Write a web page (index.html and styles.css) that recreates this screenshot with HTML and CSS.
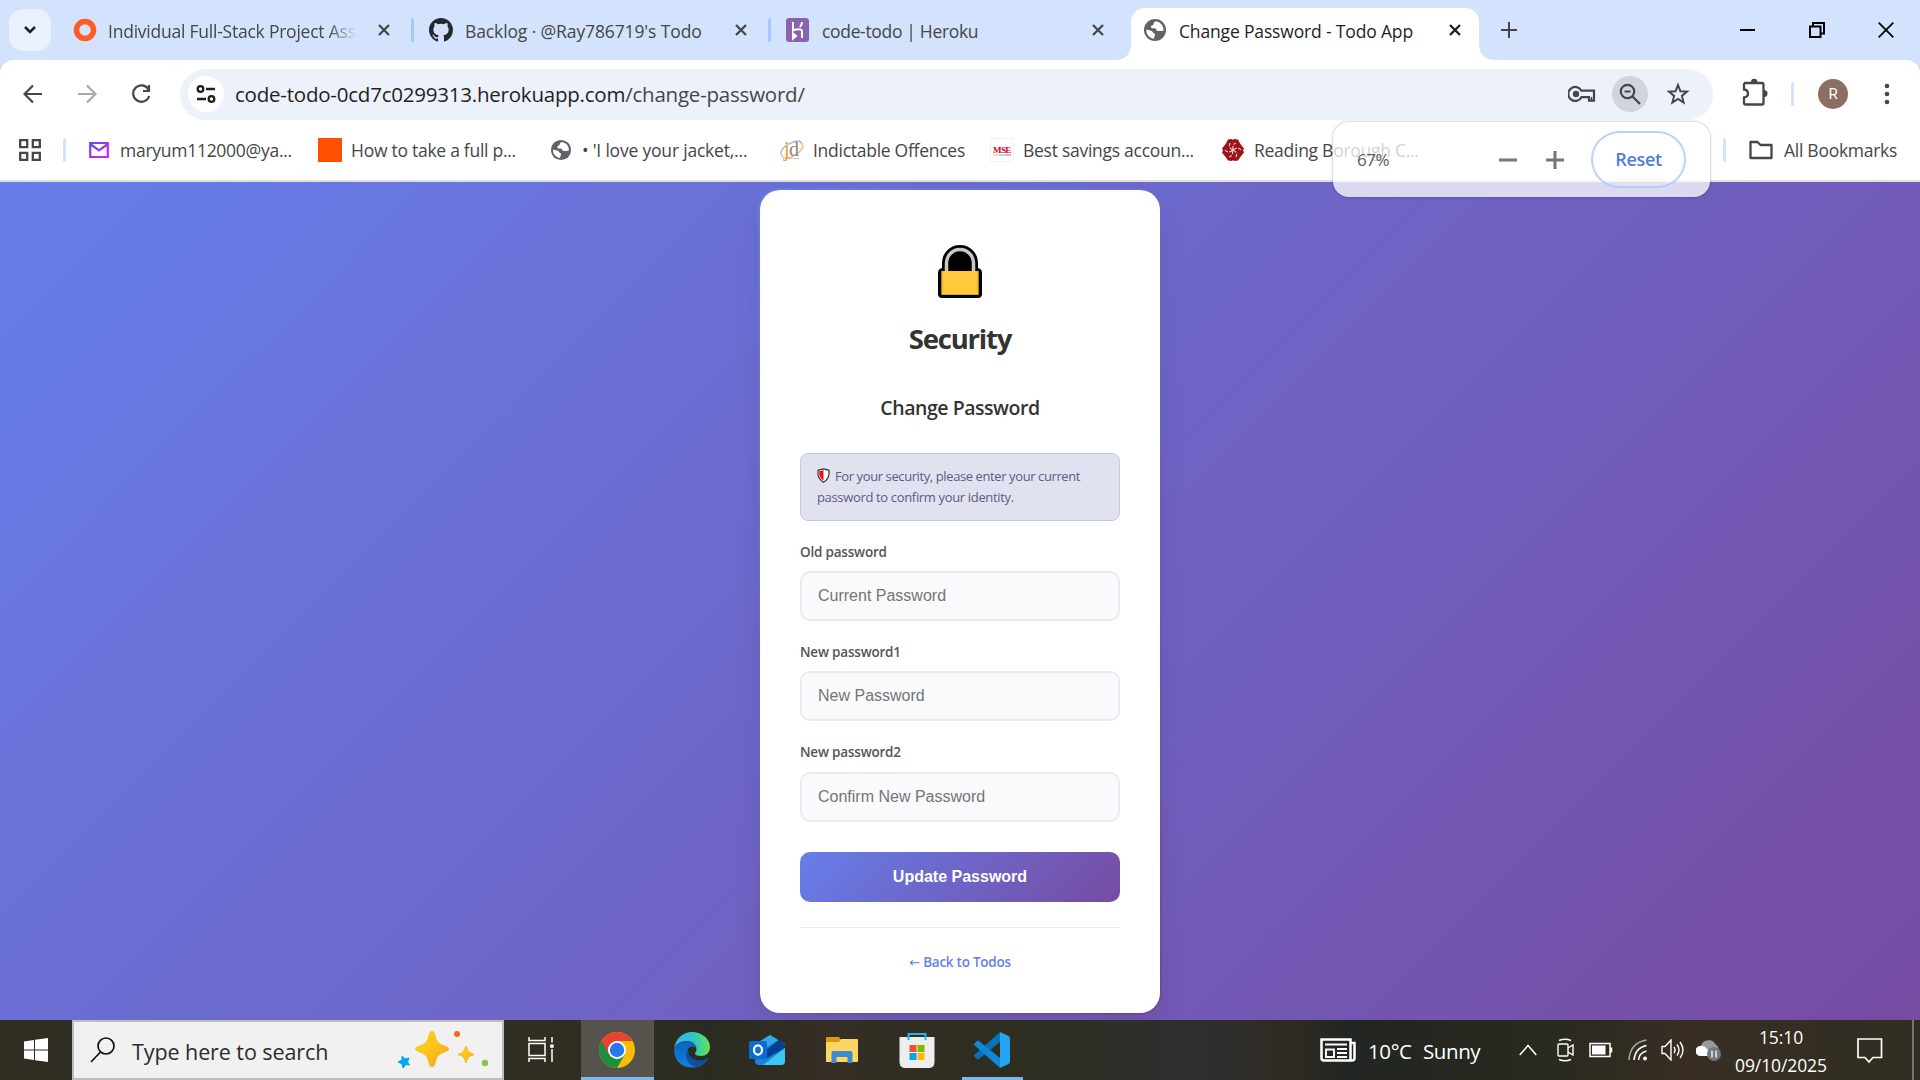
FILE: index.html
```html
<!DOCTYPE html>
<html lang="en">
<head>
<meta charset="utf-8">
<title>Change Password - Todo App</title>
<link rel="stylesheet" href="styles.css">
</head>
<body>
<svg class="defs" width="0" height="0">
  <symbol id="x" viewBox="0 0 14 14"><path d="M2 2l10 10M12 2L2 12" fill="none" stroke="currentColor" stroke-width="2.3"/></symbol>
  <symbol id="globe" viewBox="0 0 24 24"><circle cx="12" cy="12" r="11" fill="#5f6368"/><path d="M13 3.2c-3.500 1.300-1.500 3.300-3.500 4-1.800.6-2 1.800-.8 2.800 1 .8 2.800-.2 4 .8 1.400 1 .3 2.200 2.300 2.200 2 .1 4.500.2 5.700-.4A9 9 0 0 0 13 3.200M3.200 11.500c2.500 1 6 .8 6.500 2.500.4 1.600 2.600 1 2.300 3-.2 1.500-1 2.300-1 3.800A9 9 0 0 1 3.200 11.500" fill="#fff"/></symbol>
</svg>
<header class="tabs">
  <div class="search-tabs"><svg width="16" height="12" viewBox="0 0 16 12"><path d="M3 3l5 5 5-5" fill="none" stroke="#1f1f1f" stroke-width="2.500"/></svg></div>
  <div class="tab t1"><svg width="24" height="24"><circle cx="12" cy="12" r="8.500" fill="none" stroke="#ff5b26" stroke-width="5.500"/></svg><span class="title fade"><b class="s1">Individual Full-Stack Project Ass</b></span><svg class="close"><use href="#x"/></svg></div>
  <i class="sep"></i>
  <div class="tab t2"><svg width="24" height="24" viewBox="0 0 16 16"><path fill="#24292f" d="M8 0C3.580 0 0 3.580 0 8c0 3.540 2.290 6.530 5.470 7.590.4.070.55-.17.55-.38 0-.19-.01-.82-.01-1.490-2.010.37-2.530-.49-2.690-.94-.09-.23-.48-.94-.82-1.130-.28-.15-.68-.52-.01-.53.63-.01 1.080.58 1.230.82.72 1.210 1.870.87 2.330.66.07-.52.28-.87.51-1.070-1.780-.2-3.640-.89-3.640-3.950 0-.87.31-1.590.82-2.150-.08-.2-.36-1.020.08-2.120 0 0 .67-.21 2.200.82a7.600 7.600 0 0 1 4 0c1.530-1.040 2.200-.82 2.200-.82.44 1.100.16 1.920.08 2.120.51.56.82 1.270.82 2.150 0 3.070-1.870 3.750-3.650 3.950.29.25.54.73.54 1.480 0 1.070-.01 1.930-.01 2.200 0 .21.15.46.55.38A8 8 0 0 0 16 8c0-4.420-3.580-8-8-8"/></svg><span class="title"><b class="s2">Backlog · @Ray786719's Todo</b></span><svg class="close"><use href="#x"/></svg></div>
  <i class="sep"></i>
  <div class="tab t3"><svg width="24" height="24"><rect width="23" height="24" rx="3" fill="#8a63ad"/><path d="M7 4v8.500c3-1.500 9-2.500 9 1V20M7 15.500v5l3-2.500zM16 4c0 2-.8 3.500-2 5" fill="none" stroke="#fff" stroke-width="2"/></svg><span class="title"><b class="s3">code-todo | Heroku</b></span><svg class="close"><use href="#x"/></svg></div>
  <div class="tab active"><svg width="24" height="24"><use href="#globe"/></svg><span class="title"><b class="s4">Change Password - Todo App</b></span><svg class="close"><use href="#x"/></svg></div>
  <svg class="newtab" width="18" height="18"><path d="M9 1v16M1 9h16" stroke="#444746" stroke-width="2"/></svg>
  <div class="winbtns">
    <svg width="16" height="16"><path d="M0 8h15" stroke="#000" stroke-width="2"/></svg>
    <svg width="16" height="16"><path d="M1 4.500h10.500V15H1zM4 4V1h11v10.500h-3" fill="none" stroke="#000" stroke-width="2"/></svg>
    <svg width="16" height="16"><path d="M.7.7l14.600 14.600M15.300.7L.7 15.300" stroke="#000" stroke-width="1.800"/></svg>
  </div>
</header>
<div class="toolbar">
  <svg class="nav" width="20" height="20"><path d="M19 10H2M10 1.500L1.500 10l8.500 8.500" fill="none" stroke="#444746" stroke-width="2.200"/></svg>
  <svg class="nav" width="20" height="20"><path d="M1 10h17M10 1.500l8.500 8.500-8.500 8.500" fill="none" stroke="#a8a9a9" stroke-width="2.200"/></svg>
  <svg class="nav" width="20" height="20"><path d="M17.500 5.500A8.200 8.200 0 1 0 18.200 12M18 1v6h-6" fill="none" stroke="#444746" stroke-width="2.200"/></svg>
  <div class="omnibox">
    <span class="site"><svg width="20" height="20"><g fill="none" stroke="#1f1f1f" stroke-width="2.300"><circle cx="4.500" cy="5" r="2.800"/><circle cx="15.500" cy="15" r="2.800"/><path d="M10 5h9M1 15h9"/></g></svg></span>
    <span class="url">code-todo-0cd7c0299313.herokuapp.com<em>/change-password/</em></span>
    <svg width="28" height="20" viewBox="0 0 28 20"><g fill="none" stroke="#444746" stroke-width="2.200"><path d="M13.500 6.700A7 7 0 1 0 13.500 13.200H18v0h3v3.500h5V6.700z"/><path d="M23.500 13v3.500" stroke-width="1.500"/></g><circle cx="8" cy="10" r="3.200" fill="#444746"/></svg>
    <span class="zoomicon"><svg width="22" height="22"><g fill="none" stroke="#444746" stroke-width="2.200"><circle cx="8.500" cy="8.500" r="6.700"/><path d="M13.300 13.300l7.700 7.700M5.500 8.500h6"/></g></svg></span>
    <svg width="24" height="24" viewBox="0 0 24 24"><path d="M12 3l2.400 6.200 6.600.4-5.100 4.300 1.700 6.600L12 16.900l-5.600 3.600 1.700-6.600L3 9.600l6.600-.4z" fill="none" stroke="#444746" stroke-width="2"/></svg>
  </div>
  <svg class="puzzle" width="26" height="30" viewBox="0 0 26 30"><path d="M2 6h18q1.500 0 1.500 1.500V26q0 1.500-1.500 1.500H3.500Q2 27.500 2 26v-5.500q4-.5 4-4t-4-4V6" fill="none" stroke="#444746" stroke-width="2.300"/><path d="M9 5a3.200 3.200 0 0 1 6.400 0zM22 13a3.400 3.400 0 0 1 0 7z" fill="#444746"/></svg>
  <i class="sep bar"></i>
  <span class="avatar">R</span>
  <svg class="dots" width="6" height="24"><g fill="#444746"><circle cx="3" cy="4" r="2.300"/><circle cx="3" cy="12" r="2.300"/><circle cx="3" cy="20" r="2.300"/></g></svg>
</div>
<nav class="bookmarks">
  <svg class="apps" width="22" height="22"><path d="M1.200 1.200h7v7h-7zM13.800 1.200h7v7h-7zM1.200 13.800h7v7h-7zM13.800 13.800h7v7h-7z" fill="none" stroke="#444746" stroke-width="2.300"/></svg>
  <i class="sep bar"></i>
  <a class="bm b1"><svg width="20" height="20"><defs><linearGradient id="m" x2="1" y2="1"><stop stop-color="#5b4df5"/><stop offset="1" stop-color="#e51bf0"/></linearGradient></defs><path d="M1.200 3h17.600v14H1.200zM1.200 4l8.800 6.500L18.800 4" fill="none" stroke="url(#m)" stroke-width="2.200"/></svg><b>maryum112000@ya...</b></a>
  <a class="bm b2"><svg width="24" height="24"><path d="M0 0h24v24H0z" fill="#ff4f00"/></svg><b>How to take a full p...</b></a>
  <a class="bm b3"><svg width="22" height="22"><use href="#globe"/></svg><b>• 'I love your jacket,...</b></a>
  <a class="bm b4"><svg width="24" height="24"><g fill="none" stroke-width="1.300"><path d="M2 18Q-2 12 9 6T22 6" stroke="#b5b5b5"/><path d="M22 6q3 5-7 11T2 18" stroke="#f4b26a"/></g><text x="4" y="18" class="j">j</text><text x="9" y="18" class="j d">d</text><path d="M9 20.500h10" stroke="#c8c8c8"/></svg><b>Indictable Offences</b></a>
  <a class="bm b5"><svg width="24" height="24"><rect x=".5" y=".5" width="23" height="23" rx="2" fill="#fff" stroke="#f1f1f1"/><text x="3" y="15" class="mse" textLength="18">MSE</text><path d="M3 17h6" stroke="#f4c84b"/><path d="M9 17h6" stroke="#45c5d6"/><path d="M15 17h6" stroke="#e64fa0"/></svg><b>Best savings accoun...</b></a>
  <a class="bm b6"><svg width="24" height="24"><path d="M7 1.500L11 1l1 1 1-1 4 .5 2 4 4 5-1 2 1 2-4 5-2 3-4 .5-1-1-1 1-4-.5-2-3-4-5 1-2-1-2 4-5z" fill="#9c1218"/><g fill="none" stroke="#f3caca" stroke-width="1.200" stroke-dasharray="4 1.500"><path d="M12 12q-1-6 3-7M12 12q5-4 8 0M12 12q5 2 3 7M12 12q0 6-4 7M12 12q-5 4-8 0M12 12q-5-2-3-7"/></g></svg><b>Reading Borough C...</b></a>
  <span class="allbm"><i class="sep bar"></i><svg width="24" height="20"><path d="M1.500 2h7l3 3h11v13h-21z" fill="none" stroke="#444746" stroke-width="2.300" stroke-linejoin="round"/></svg><b>All Bookmarks</b></span>
</nav>
<aside class="zoombox"><span class="pct">67%</span><svg class="zm" width="18" height="18"><path d="M0 9h18" stroke="#767676" stroke-width="3"/></svg><svg class="zp" width="18" height="18"><path d="M0 9h18M9 0v18" stroke="#767676" stroke-width="3"/></svg><button class="reset">Reset</button></aside>
<main class="page">
  <section class="card">
    <svg class="lock" width="44" height="54" viewBox="0 0 44 54"><path d="M4 24V19a18 18 0 0 1 36 0v5q4 1 4 5v21q0 4-4 4H4q-4 0-4-4V29q0-4 4-5" fill="#000"/><path d="M8.500 28V19a13.500 13.500 0 0 1 27 0v9" fill="none" stroke="#c8c8c8" stroke-width="3.500"/><path d="M3.500 27h37v24h-37z" fill="#ffc83d"/><path d="M4 27v23.500h36V27" fill="none" stroke="#dca020"/></svg>
    <h1>Security</h1>
    <h2>Change Password</h2>
    <div class="note"><svg width="13" height="15" viewBox="0 0 13 15"><path d="M6.500.8l5.500 1.500v4q-.5 5-5.500 8-5-3-5.500-8v-4z" fill="#fff" stroke="#333" stroke-width="1.200"/><path d="M6.500 2.300v10.300Q2.700 10 2.300 6.300v-3z" fill="#e81224"/></svg><b class="n1">For your security, please enter your current</b><br><b class="n2">password to confirm your identity.</b></div>
    <label>Old password</label><input placeholder="Current Password">
    <label>New password1</label><input placeholder="New Password">
    <label>New password2</label><input class="last" placeholder="Confirm New Password">
    <button class="update">Update Password</button>
    <footer><a><span class="arrow">←</span> Back to Todos</a></footer>
  </section>
</main>
<div class="taskbar">
  <div class="start"><svg width="24" height="24"><path d="M0 3.400L10 2v9.500H0zM11 1.800L24 0v11.500H11zM0 12.500h10V22L0 20.600zM11 12.500h13V24l-13-1.800z" fill="#fff"/></svg></div>
  <div class="search">
    <svg width="26" height="26"><circle cx="16" cy="9" r="8" fill="none" stroke="#111" stroke-width="1.700"/><path d="M10.500 15L1 25" stroke="#111" stroke-width="1.700"/></svg>
    <b>Type here to search</b>
    <svg class="spark" width="96" height="42" viewBox="0 0 96 42"><defs><linearGradient id="g" x2="1" y2="1"><stop stop-color="#ffd21f"/><stop offset=".5" stop-color="#fcc419"/><stop offset="1" stop-color="#f39a2b"/></linearGradient></defs><path d="M35 2q3 0 4 6 1 6 7 8 6 2 6 4t-6 4q-6 2-7 8-1 6-4 6t-4-6q-1-6-7-8-6-2-6-4t6-4q6-2 7-8 1-6 4-6" fill="url(#g)"/><path d="M69 17q2 5 2.500 5.500T77 25.500q-5 2-5.500 2.500T69 34q-2-5-2.500-6T61 25.500q5-2 5.500-3T69 17" fill="url(#g)" stroke="#fbb928"/><path d="M5 27l3 3 4-1-1.500 4 2 3-3.500-.5L6 39l-1-4-4-2 4-2z" fill="#00a8f0" stroke="#00a8f0" stroke-linejoin="round"/><circle cx="60" cy="5" r="3" fill="#f26522"/><circle cx="88" cy="34" r="3.200" fill="#8cc63f"/></svg>
  </div>
  <div class="task view"><svg width="26" height="26"><path d="M1 0v3.500h16V0M1 25v-3.500h16V25M1 6.500h16v12H1zM24 0v5.500M24 12v13" fill="none" stroke="#fff" stroke-width="1.500"/><path d="M22.200 7.500h3.500v3.300h-3.500z" fill="#fff"/></svg></div>
  <div class="task on"><svg width="36" height="36" viewBox="0 0 36 36"><circle cx="18" cy="18" r="18" fill="#fbbc05"/><path d="M2.400 9A18 18 0 0 0 18 36l7.800-13.500L18 18z" fill="#1e8e3e"/><path d="M18 9h15.600A18 18 0 0 0 2.400 9l7.800 13.500z" fill="#e94235"/><circle cx="18" cy="18" r="9" fill="#fff"/><circle cx="18" cy="18" r="7.200" fill="#2878eb"/></svg></div>
  <div class="task"><svg width="36" height="36" viewBox="0 0 36 36"><defs><linearGradient id="e1"><stop stop-color="#35b8ee"/><stop offset=".55" stop-color="#2fc4c7"/><stop offset="1" stop-color="#67e34c"/></linearGradient><linearGradient id="e2" x2="0" y2="1"><stop stop-color="#0d62b7"/><stop offset="1" stop-color="#0e83dd"/></linearGradient></defs><path d="M0 17C1 7 9 0 18 0c10 0 18 7 18 15 0 6-4 9-9 9-4 0-6-1-6-2.500 0-1 1.500-2 1.500-4.500 0-4-4-8-9.500-8C7 9 1 12 0 17" fill="url(#e1)"/><path d="M0 18C1 12 7 9 13 9c5 0 9 3 9.500 7.500C20 13 13 14 13 21c0 8 6 13 13 13-12 5-26-2-26-16" fill="url(#e2)"/><path d="M14 17c-5 8 1 18 10 18 5-1 9-6 10-8 0-1-1-1-2 0-10 4-18-1-18-10" fill="#0f4f9e"/></svg></div>
  <div class="task"><svg width="36" height="32" viewBox="0 0 36 32"><path d="M6 10L21 1l15 9v17q0 4-4 4H10q-4 0-4-4z" fill="#1684d8"/><path d="M21 1l8 5-14 9-5-7z" fill="#32a8ea"/><path d="M30 6l6 5v3L18 24v-9z" fill="#063f91"/><path d="M36 14v13q0 4-4 4H14z" fill="#39c7f5"/><rect y="7" width="18" height="18" rx="1.500" fill="#0b6dcf"/><ellipse cx="9" cy="16" rx="4" ry="4.700" fill="none" stroke="#fff" stroke-width="2.200"/></svg></div>
  <div class="task"><svg width="32" height="26"><path d="M0 1q0-1 1-1h12l2 3v5H0z" fill="#d99a0b"/><path d="M0 5h13l2-3h16q1 0 1 1v21q0 1-1 1H0z" fill="#ffd561"/><path d="M5.500 26V16q0-2 2-2h17q2 0 2 2v10h-5v-6h-11v6z" fill="#398bd4"/></svg></div>
  <div class="task"><svg width="36" height="36"><path d="M.5 5h35v25q0 6-6 6h-23q-6 0-6-6z" fill="#ededed"/><path d="M9.500 8V2h17v6" fill="none" stroke="#29b1ea" stroke-width="2"/><path d="M10.500 13h7v7h-7z" fill="#f25022"/><path d="M18.500 13h7v7h-7z" fill="#7fba00"/><path d="M10.500 21h7v7h-7z" fill="#00a4ef"/><path d="M18.500 21h7v7h-7z" fill="#ffb900"/></svg></div>
  <div class="task run"><svg width="36" height="36" viewBox="0 0 36 36"><path d="M26 0v10L5 27q-1 .8-2 0l-2.500-2.300q-1-1 0-2z" fill="#0871b8"/><path d="M26 36V26L5 9q-1-.8-2 0L.5 11.300q-1 1 0 2z" fill="#0d88d4"/><path d="M26 0l8.500 4q1.500.8 1.500 2.500v23q0 1.700-1.500 2.500L26 36z" fill="#25a4f1"/></svg></div>
  <div class="tray">
    <div class="weather"><svg width="36" height="24" viewBox="0 0 36 24"><path d="M1.500 1.500h29v21H4q-2.500 0-2.500-2.500zM30.500 5h4v15q0 2.500-2.500 2.500h-3" fill="none" stroke="#fff" stroke-width="2.500"/><path d="M5 6.500h22M17 11h10M17 15h10M17 19h10" stroke="#fff" stroke-width="1.900"/><path d="M6 11.500h8v7.500H6z" fill="none" stroke="#fff" stroke-width="1.900"/></svg><b class="deg">10°C</b><b class="sun">Sunny</b></div>
    <svg class="caret" width="18" height="12"><path d="M.7 11L9 1.500l8.300 9.500" fill="none" stroke="#fff" stroke-width="1.500"/></svg>
    <svg class="meet" width="18" height="24"><g fill="none" stroke="#fff" stroke-width="1.400"><rect x="1" y="6" width="10" height="12" rx="1"/><path d="M11 10l5-3v10l-5-3M2 2.500Q8 0 14 2.500M2 21.500q6 2.500 12 0"/></g></svg>
    <svg class="battery" width="24" height="16"><path d="M1 1.500h20v13H1zM22.500 5.500v5" fill="none" stroke="#fff" stroke-width="1.500"/><path d="M3 3.500h13.500v9H3z" fill="#fff"/></svg>
    <svg class="wifi" width="20" height="22"><path d="M1 21Q2 4 18.500 1" fill="none" stroke="#aaa" stroke-width="1.500"/><path d="M6 21Q7 9 18.500 6.500M10.500 21Q11 14 18.500 12" fill="none" stroke="#fff" stroke-width="1.500"/><circle cx="17" cy="19.500" r="2" fill="#fff"/></svg>
    <svg class="vol" width="24" height="22"><path d="M1 7.500h3L10 1v20l-6-6.500H1zM13 8q2 3 0 6M16 5.500q4 5.500 0 11M19 3q6 8 0 16" fill="none" stroke="#fff" stroke-width="1.400"/></svg>
    <svg class="cloud" width="26" height="24"><path d="M5 8a8 8 0 0 1 15-1q3 1 2 5L8 18z" fill="#999"/><path d="M5 18a5 5 0 0 1-1-10q4-1 7 3l8 7z" fill="#fff"/><circle cx="18" cy="16" r="7" fill="#73777b"/><path d="M16 12.500v7M20 12.500v7" stroke="#fff" stroke-width="1.300"/></svg>
    <div class="clock"><b class="time">15:10</b><b class="date">09/10/2025</b></div>
    <svg class="action" width="26" height="28"><path d="M1 1h23.500v18.500H16l-4 4.500-4-4.500H1z" fill="none" stroke="#fff" stroke-width="1.700"/></svg>
    <i class="peek"></i>
  </div>
</div>
</body>
</html>
```
FILE: styles.css
```css
* { box-sizing: border-box; }
body { margin: 0; width: 1920px; height: 1080px; overflow: hidden; display: flex; flex-direction: column; position: relative; font-family: "Open Sans", "Noto Sans", sans-serif; background: #fff; }
b { font-weight: 400; white-space: nowrap; }
svg, .sep { flex: none; }
.defs { position: absolute; }
.tabs { position: relative; z-index: 1; height: 60px; flex: none; background: #d3e3fd; display: flex; align-items: center; padding: 0 26px 0 9px; font-size: 17.5px; color: #444746; }
.search-tabs { width: 42px; height: 42px; border-radius: 14px; background: #e9f0fe; display: flex; align-items: center; justify-content: center; }
.tab { display: flex; align-items: center; height: 52px; padding-right: 20px; }
.tab .title { margin-left: 12px; flex: 1; overflow: hidden; display: flex; padding-top: 2px; }
.t1 { width: 360px; padding-left: 22px; }
.t1 .title { margin-left: 11px; }
.s1 { letter-spacing: -.23px; }
.t2 { width: 354px; padding-left: 15px; }
.s2 { letter-spacing: -.12px; }
.t3 { width: 360px; padding-left: 15px; padding-right: 26px; }
.s3 { letter-spacing: -.33px; }
.s4 { letter-spacing: -.16px; }
.fade { -webkit-mask-image: linear-gradient(90deg, #000 87%, transparent 99%); mask-image: linear-gradient(90deg, #000 87%, transparent 99%); max-width: 252px; margin-right: 17px; }
.sep { width: 3px; height: 24px; border-radius: 2px; background: #a8c7fa; }
.sep.bar { background: #d3e3fd; }
.close { width: 14px; height: 14px; }
.active { width: 348px; height: 52px; align-self: flex-end; background: #fff; border-radius: 14px 14px 0 0; padding: 0 17px 8px 12px; color: #1f1f1f; position: relative; }
.active::before, .active::after { content: ""; position: absolute; bottom: 0; width: 14px; height: 14px; }
.active::before { left: -14px; background: radial-gradient(circle at 0 0, transparent 13.500px, #fff 14px); }
.active::after { right: -14px; background: radial-gradient(circle at 100% 0, transparent 13.500px, #fff 14px); }
.newtab { margin-left: 21px; }
.winbtns { margin-left: auto; display: flex; gap: 53px; }
.toolbar { height: 65px; flex: none; display: flex; align-items: center; background: #fff; border-radius: 14px 14px 0 0; padding: 5px 30px 1px 23px; box-shadow: 0 -14px 0 0 #d3e3fd; }
.nav { margin-right: 34px; flex: none; }
.nav:nth-child(3) { margin-right: 29px; }
.omnibox { width: 1533px; flex: none; height: 51px; margin-top: 5px; border-radius: 26px; background: #ecf1fa; display: flex; align-items: center; padding: 0 23px 0 8px; }
.toolbar { padding-top: 3px; padding-bottom: 0; }
.omnibox { margin-top: 0; }
.site { width: 36px; height: 36px; border-radius: 50%; background: #fff; display: flex; align-items: center; justify-content: center; }
.url { margin-left: 11px; flex: 1; font-size: 20.5px; color: #1f1f1f; letter-spacing: -.22px; white-space: nowrap; }
.url em { font-style: normal; color: #444746; }
.zoomicon { width: 36px; height: 36px; border-radius: 50%; background: #d0d5dd; display: flex; align-items: center; justify-content: center; margin: 0 18px 0 16px; }
.puzzle { margin: 0 23px 4px 29px; }
.avatar { width: 30px; height: 30px; flex: none; border-radius: 50%; background: #8d6e63; color: #fff; font: 15px/30px Roboto, sans-serif; text-align: center; margin: 0 36px 0 24px; }
.bookmarks { height: 57px; flex: none; display: flex; align-items: center; padding: 0 21px 5px 19px; border-bottom: 2px solid #dedfe2; font-size: 17.5px; letter-spacing: -.27px; color: #444746; }
.apps { margin-right: 22px; }
.bm { display: flex; align-items: center; gap: 9px; }
.b1 { margin-left: 23px; width: 229px; gap: 11px; }
.b2 { width: 232px; }
.b3 { width: 230px; gap: 10px; letter-spacing: -.2px; }
.b4 { width: 210px; }
.b5 { width: 231px; }
.b6 { width: 220px; }
.allbm { margin-left: auto; display: flex; align-items: center; gap: 11px; width: 176px; }
.allbm svg { margin-left: 12px; }
.j { font: 20px "Liberation Serif", serif; fill: #f0952a; }
.j.d { fill: #888; }
.mse { font: bold 9px "Liberation Serif", serif; fill: #d5001f; }
.zoombox { position: absolute; z-index: 5; left: 1333px; top: 122px; width: 377px; height: 75px; border-radius: 16px; background: rgba(255,255,255,.76); box-shadow: 0 0 3px rgba(0,0,0,.35); display: flex; align-items: center; padding: 0 24px; }
.pct { font-size: 17px; color: #5a5b5b; width: 142px; letter-spacing: -.5px; }
.zp { margin: 0 27px 0 29px; }
.reset { width: 95px; height: 57px; padding: 0; border-radius: 29px; border: 2px solid rgba(168,199,250,.8); background: rgba(255,255,255,.2); color: #4a80dd; font: 600 18px "Open Sans", sans-serif; letter-spacing: -.3px; margin-top: -1px; }
.page { height: 838px; flex: none; display: flex; justify-content: center; align-items: flex-start; background: linear-gradient(135deg, #667eea 0%, #764ba2 100%); overflow: hidden; padding-top: 8px; isolation: isolate; }
.card { width: 400px; height: 823px; border-radius: 20px; background: #fff; padding: 54px 40px 0; display: flex; flex-direction: column; position: relative; box-shadow: 0 14px 30px rgba(0,0,0,.08); }
.card::before { content: ""; position: absolute; inset: -2px; z-index: -1; border-radius: 22px; background: linear-gradient(135deg, #667eea, #764ba2); }
.lock { align-self: center; }
h1 { margin: 21px 0 0; text-align: center; font-size: 27.5px; line-height: 40px; color: #333; letter-spacing: -1.2px; }
h2 { margin: 33px 0 0; text-align: center; font-size: 19.5px; line-height: 32px; font-weight: 600; color: #333; letter-spacing: -.46px; }
.note { margin-top: 29px; height: 68px; flex: none; border: 1px solid #c9c8e4; border-radius: 8px; background: #e1e2ef; padding: 12px 16px; font-size: 13px; line-height: 21px; color: #5d5b86; white-space: nowrap; letter-spacing: -.4px; }
.note svg { vertical-align: -2px; margin-right: 5px; }
.n2 { letter-spacing: -.34px; }
label { margin-top: 21px; font-size: 13.5px; font-weight: 600; line-height: 20px; color: #555; letter-spacing: -.2px; }
input { margin-top: 9px; height: 50px; flex: none; border: 2px solid #e9ecef; border-radius: 10px; background: #f8fafc; padding: 0 16px; font: 16px "Liberation Sans", sans-serif; }
input::placeholder { color: #757575; }
.last { margin-top: 10px; }
.update { margin-top: 30px; height: 50px; flex: none; border: 0; border-radius: 10px; color: #fff; background: linear-gradient(135deg, #667eea, #764ba2); font: bold 16px "Liberation Sans", sans-serif; }
.card footer { margin-top: 25px; border-top: 1px solid #e9ecef; padding-top: 24px; text-align: center; font-size: 13.5px; line-height: 20px; font-weight: 600; color: #667eea; letter-spacing: -.25px; }
.arrow { font: 13px/1 "DejaVu Sans", sans-serif; }
.taskbar { height: 60px; flex: none; display: flex; color: #fff; background: linear-gradient(90deg, #302d22 0, #302e22 30%, #2a2b20 37%, #352e24 43%, #2d2d20 53%, #302f30 62%, #2e2b23 67%, #222622 70%, #28291f 80%, #382e24 88%, #302e22 100%); }
.start { width: 72px; display: flex; align-items: center; padding-left: 24px; }
.search { width: 432px; border: 2px solid #bdbdbd; background: #f1f1f1; display: flex; align-items: center; padding-left: 16px; color: #2c2c2c; font-size: 21.5px; }
.search b { margin-left: 16px; width: 265px; padding-top: 2px; letter-spacing: -.08px; }
.task { width: 75px; display: flex; justify-content: center; align-items: center; }
.task.view { width: 77px; padding-right: 4px; }
.task.on { width: 73px; background: #55534b; border-bottom: 3px solid #76b9ed; padding-top: 3px; padding-right: 2px; }
.task.run { position: relative; }
.task.run::after { content: ""; position: absolute; left: 8px; bottom: 0; width: 61px; height: 3px; background: #76b9ed; }
.tray { margin-left: auto; width: 600px; display: flex; align-items: center; }
.weather { display: flex; align-items: center; font-size: 20.5px; letter-spacing: -.4px; width: 199px; flex: none; }
.weather b { padding-top: 2px; }
.deg { margin-left: 12px; width: 55px; }
.caret { margin-right: 20px; }
.meet { margin-right: 14px; }
.battery { margin-right: 15px; }
.wifi { margin-right: 13px; }
.vol { margin-right: 11px; }
.cloud { margin-right: 12px; }
.clock { width: 94px; display: flex; flex-direction: column; align-items: center; font-size: 17.5px; letter-spacing: -.1px; line-height: 28px; margin-right: 29px; padding-top: 1px; }
.action { margin-right: 29px; margin-top: 3px; }
.peek { width: 2px; height: 60px; background: #77756f; }
```
